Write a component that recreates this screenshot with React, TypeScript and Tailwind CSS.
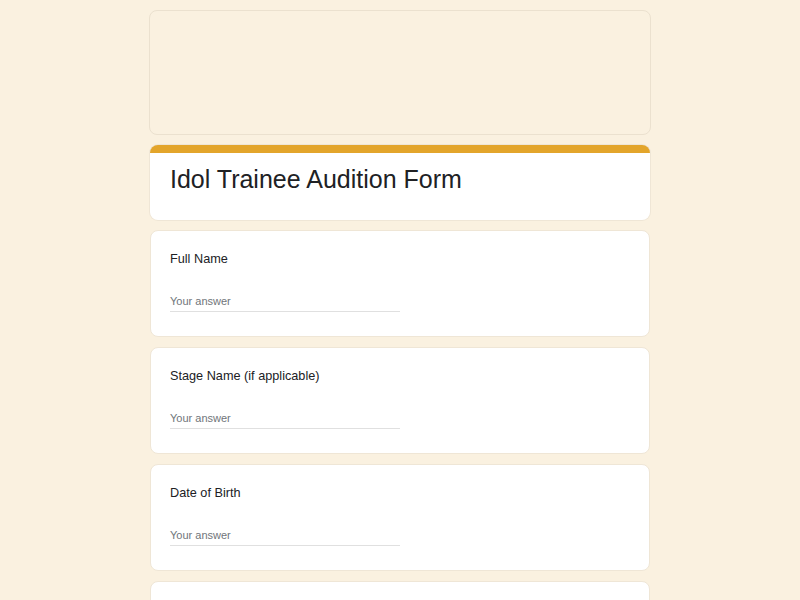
import React from 'react';

const QUESTIONS = ['Full Name', 'Stage Name (if applicable)', 'Date of Birth', 'Nationality'];

export default function App() {
  return (
    <div
      className="min-h-screen bg-[#faf1e0] py-[10px]"
      style={{ fontFamily: 'Arial, "Liberation Sans", sans-serif' }}
    >
      <div className="mx-auto w-[500px] flex flex-col gap-[10px]">
        <div className="-mx-px h-[125px] rounded-lg border border-[#ebe1cf]" />

        <div className="rounded-lg bg-white border-t-[8px] border-[#e3a52b] shadow-[0_0_0_1px_#efe6d6] px-5 pt-[12px] pb-[27px]">
          <h1 className="text-[25px] leading-[28px] text-[#202124]">Idol Trainee Audition Form</h1>
        </div>

        {QUESTIONS.map(q => (
          <div
            key={q}
            className="rounded-lg bg-white border border-[#efe6d6] px-[19px] pt-5 pb-6"
          >
            <div className="text-[12.7px] leading-4 text-[#202124]">{q}</div>
            <div className="mt-6 w-[230px] h-[21px] border-b border-[#e0e0e0] text-[11px] leading-[20px] text-[#70757a]">
              Your answer
            </div>
          </div>
        ))}
      </div>
    </div>
  );
}
